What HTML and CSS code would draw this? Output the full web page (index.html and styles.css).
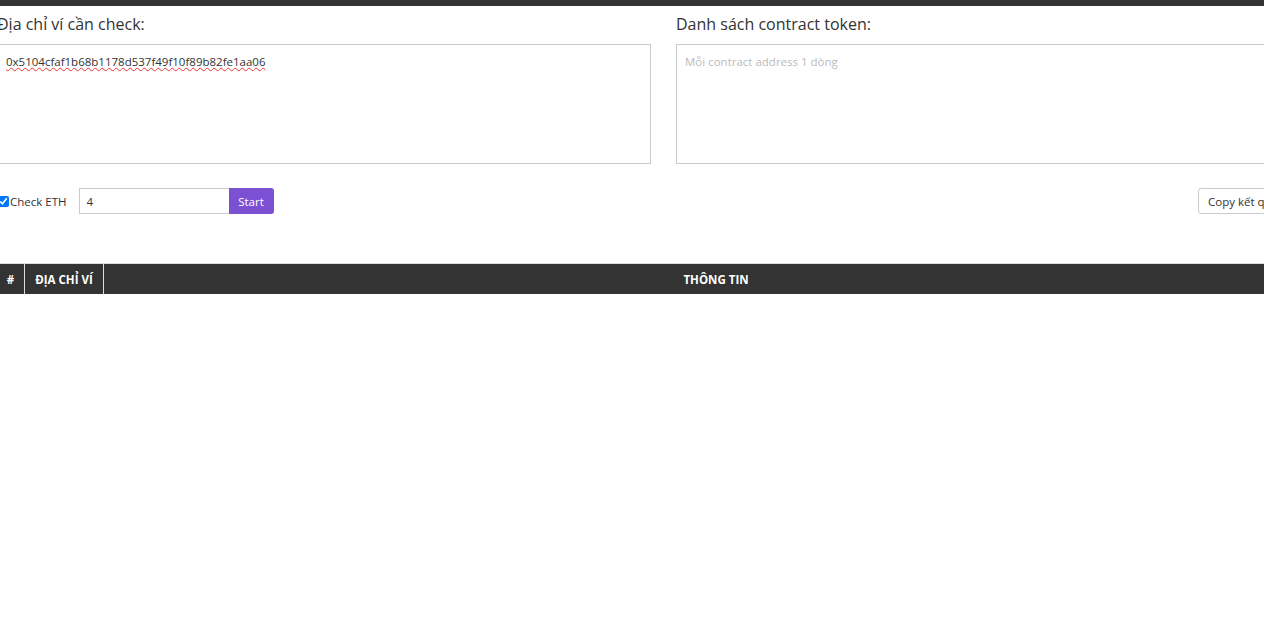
FILE: index.html
```html
<!DOCTYPE html>
<html lang="vi">
<head>
    <meta charset="UTF-8">
    <meta name="viewport" content="width=device-width, initial-scale=1.0">
    <title>Check token</title>
    <link rel="stylesheet" href="styles.css">
</head>
<body>
    <div class="top-bar"></div>
    <div class="page">
        <div class="inputs">
            <div class="field">
                <label class="field-label">Địa chỉ ví cần check:</label>
                <textarea class="box box-wallet" spellcheck="false">0x5104cfaf1b68b1178d537f49f10f89b82fe1aa06</textarea>
            </div>
            <div class="field">
                <label class="field-label">Danh sách contract token:</label>
                <textarea class="box" spellcheck="false" placeholder="Mỗi contract address 1 dòng"></textarea>
            </div>
        </div>

        <div class="controls">
            <label class="check"><input type="checkbox" checked>Check ETH</label>
            <div class="run">
                <input type="text" class="num" value="4">
                <button class="btn-start">Start</button>
            </div>
            <button class="btn-copy">Copy kết quả</button>
        </div>

        <table class="result">
            <thead>
                <tr>
                    <th class="col-no">#</th>
                    <th class="col-addr">ĐỊA CHỈ VÍ</th>
                    <th>THÔNG TIN</th>
                </tr>
            </thead>
            <tbody id="result"></tbody>
        </table>
    </div>
</body>
</html>
```

FILE: styles.css
```css
body {
    margin: 0;
    font-family: "Open Sans", "Noto Sans", Arial, sans-serif;
    color: #333;
    background: #fff;
    overflow: hidden;
}

.top-bar {
    height: 6px;
    background: #333;
}

.page {
    width: 1333px;
    margin-left: -3px;
}

.inputs {
    display: flex;
    gap: 25px;
    padding-top: 7px;
}

.field {
    flex: 1;
}

.field-label {
    display: block;
    font-size: 16px;
    line-height: 22px;
    margin-bottom: 9px;
    color: #333;
}

.box {
    display: block;
    box-sizing: border-box;
    width: 100%;
    height: 120px;
    border: 1px solid #ccc;
    padding: 9px 8px;
    font-family: inherit;
    font-size: 11.5px;
    color: #333;
    resize: none;
    outline: none;
}

.box-wallet {
    text-decoration: underline wavy #e33;
    text-decoration-thickness: 1px;
}

.box::placeholder {
    color: #bbb;
}

.controls {
    display: flex;
    align-items: center;
    margin-top: 24px;
    height: 26px;
}

.check {
    display: flex;
    align-items: center;
    font-size: 11.5px;
    color: #333;
    margin-left: 1px;
    margin-right: 12px;
}

.check input {
    width: 11px;
    height: 11px;
    margin: 0 1px 0 0;
}

.run {
    display: flex;
}

.num {
    box-sizing: border-box;
    width: 150px;
    height: 26px;
    border: 1px solid #ccc;
    border-right: none;
    padding: 0 7px;
    font-family: inherit;
    font-size: 11.5px;
    color: #333;
    outline: none;
}

.btn-start {
    height: 26px;
    width: 45px;
    border: none;
    border-radius: 0 3px 3px 0;
    background: #7b50d3;
    color: #fff;
    font-family: inherit;
    font-size: 11.5px;
    padding: 0;
}

.btn-copy {
    margin-left: auto;
    margin-right: 42px;
    height: 26px;
    border: 1px solid #ccc;
    border-radius: 3px;
    background: #fff;
    color: #333;
    font-family: inherit;
    font-size: 11.5px;
    padding: 0 9px;
}

.result {
    width: 1331px;
    margin-top: 49px;
    border-collapse: collapse;
    border-top: 1px solid #ddd;
}

.result th {
    background: #333;
    color: #fff;
    font-size: 11.5px;
    font-weight: bold;
    height: 30px;
    padding: 0 8px;
    border-left: 1px solid #ddd;
}

.result th:first-child {
    border-left: none;
}

.col-no {
    width: 11px;
}

.col-addr {
    width: 62px;
}
```
